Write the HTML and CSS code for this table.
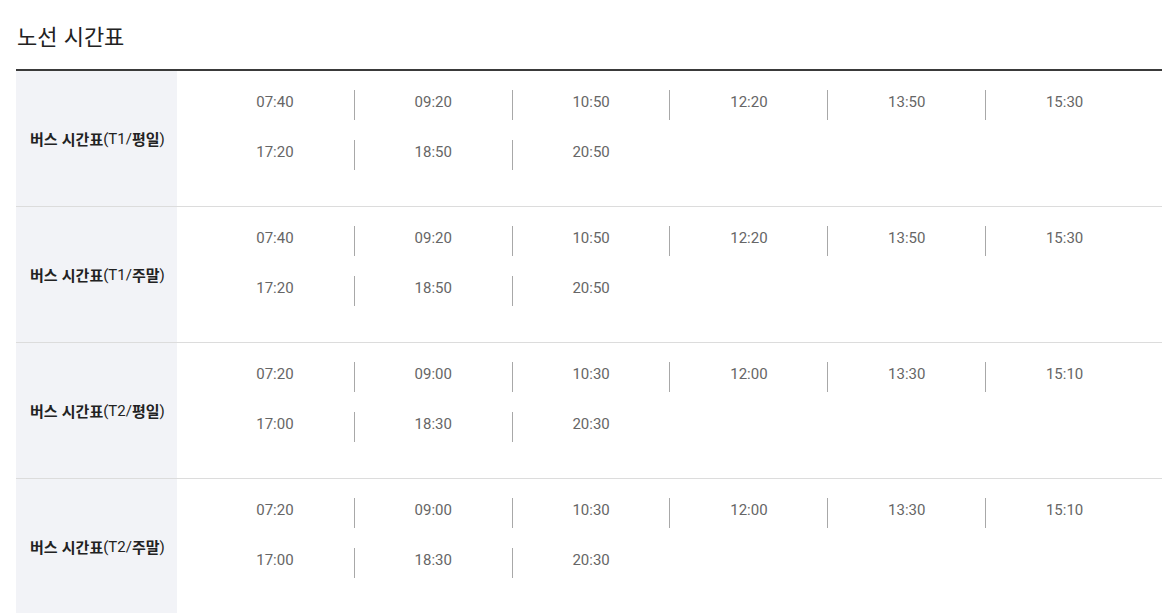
FILE: index.html
```html
<!DOCTYPE html>
<html lang="ko">
<head>
<meta charset="utf-8">
<title>노선 시간표</title>
<link rel="stylesheet" href="styles.css">
</head>
<body>
<div class="page">
  <h2 class="title">노선 시간표</h2>
  <div class="timetable">
    <div class="row">
      <div class="label"><span class="ko">버스 시간표</span>(T1/<span class="ko">평일</span>)</div>
      <ul class="times">
        <li>07:40</li><li>09:20</li><li>10:50</li><li>12:20</li><li>13:50</li><li>15:30</li>
        <li>17:20</li><li>18:50</li><li>20:50</li>
      </ul>
    </div>
    <div class="row">
      <div class="label"><span class="ko">버스 시간표</span>(T1/<span class="ko">주말</span>)</div>
      <ul class="times">
        <li>07:40</li><li>09:20</li><li>10:50</li><li>12:20</li><li>13:50</li><li>15:30</li>
        <li>17:20</li><li>18:50</li><li>20:50</li>
      </ul>
    </div>
    <div class="row">
      <div class="label"><span class="ko">버스 시간표</span>(T2/<span class="ko">평일</span>)</div>
      <ul class="times">
        <li>07:20</li><li>09:00</li><li>10:30</li><li>12:00</li><li>13:30</li><li>15:10</li>
        <li>17:00</li><li>18:30</li><li>20:30</li>
      </ul>
    </div>
    <div class="row">
      <div class="label"><span class="ko">버스 시간표</span>(T2/<span class="ko">주말</span>)</div>
      <ul class="times">
        <li>07:20</li><li>09:00</li><li>10:30</li><li>12:00</li><li>13:30</li><li>15:10</li>
        <li>17:00</li><li>18:30</li><li>20:30</li>
      </ul>
    </div>
  </div>
</div>
</body>
</html>
```
FILE: styles.css
```css
* { box-sizing: border-box; }
html, body {
  margin: 0;
  padding: 0;
  background: #fff;
}
body {
  font-family: Roboto, "Noto Sans CJK KR", sans-serif;
  color: #222;
  overflow: hidden;
}
.page {
  padding: 0 0 0 16px;
}
.title {
  margin: 0;
  padding: 20px 0 0 1px;
  height: 69px;
  font-family: "Noto Sans CJK KR", sans-serif;
  font-size: 22px;
  font-weight: 400;
  line-height: 30px;
  color: #222;
}
.timetable {
  border-top: 2px solid #3a3a3a;
}
.row {
  display: flex;
  border-bottom: 1px solid #dcdcdc;
}
.label {
  flex: 0 0 161px;
  background: #f2f3f7;
  display: flex;
  align-items: center;
  padding-left: 14px;
  font-size: 15px;
  color: #222;
  white-space: nowrap;
}
.label .ko {
  font-family: "Noto Sans CJK KR", sans-serif;
  font-weight: 700;
}
.times {
  flex: 1;
  list-style: none;
  margin: 0;
  padding: 19px 19px 16px;
  display: grid;
  grid-template-columns: repeat(6, 1fr);
  grid-auto-rows: 30px;
  row-gap: 20px;
  align-content: start;
  height: 135px;
}
.times li {
  display: flex;
  align-items: center;
  justify-content: center;
  padding-bottom: 6px;
  font-size: 15px;
  color: #666;
  border-left: 1px solid #a8a8a8;
}
.times li:nth-child(6n+1) {
  border-left: none;
}
```
